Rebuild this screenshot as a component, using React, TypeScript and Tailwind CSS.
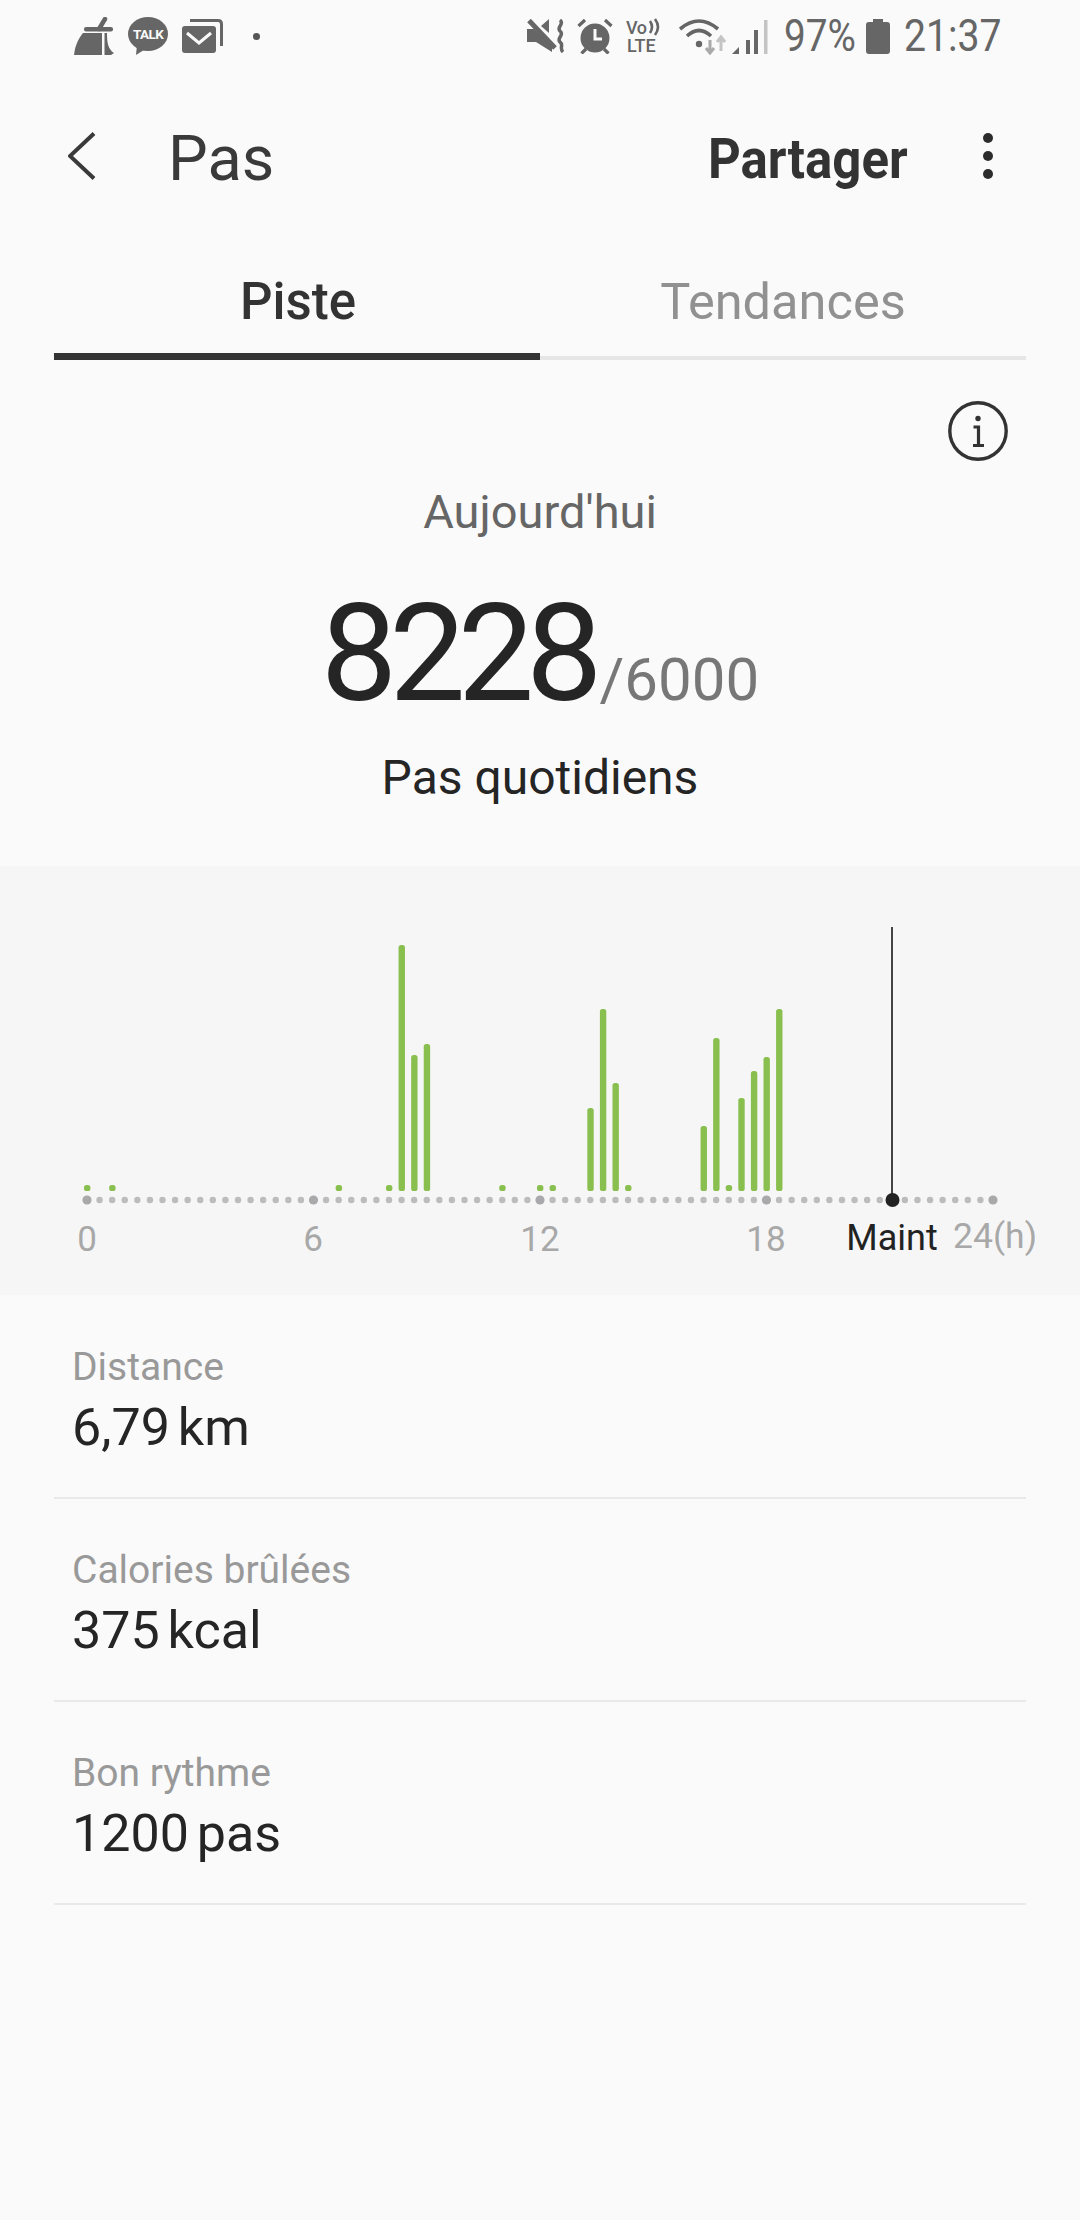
import React from 'react';

const ICON = '#666666';

const BroomIcon = () => (
  <svg width="40" height="38" viewBox="0 0 40 38" fill={ICON}>
    <path d="M31 2 L25 12" stroke={ICON} strokeWidth="4.5" strokeLinecap="round" />
    <rect x="10" y="10" width="29" height="4.5" rx="2" />
    <path d="M0 38 C1 29 4 22 9 16 H28 V38 Z" />
    <path d="M30.5 16 H33 C33 26 34 32 40 36 L37 38 H30.5 Z" />
  </svg>
);

const TalkIcon = () => (
  <svg width="40" height="38" viewBox="0 0 40 38">
    <ellipse cx="20" cy="17" rx="20" ry="17" fill={ICON} />
    <path d="M9 28 L8 38 L19 31 Z" fill={ICON} />
    <text x="20" y="22" textAnchor="middle" fontSize="13.5" fontWeight="700" fill="#fafafa" letterSpacing="-0.6">TALK</text>
  </svg>
);

const MailIcon = () => (
  <svg width="41" height="34" viewBox="0 0 41 34">
    <path d="M8 1.5 H36 Q39.5 1.5 39.5 5 V27" fill="none" stroke={ICON} strokeWidth="3" />
    <rect x="0" y="7" width="34" height="27" rx="3" fill={ICON} />
    <path d="M5 14 L17 24 L29 14" fill="none" stroke="#fafafa" strokeWidth="3" />
  </svg>
);

const MuteIcon = () => (
  <svg width="37" height="34" viewBox="0 0 37 34" fill={ICON}>
    <path d="M0 10 H7 L25 28 V33 L9 23 H0 Z" />
    <path d="M14 7 L22 0 V14 Z" />
    <path d="M2 1.5 L28 29" stroke={ICON} strokeWidth="5" />
    <path d="M33 1 C38 5 29 8 33 12 C38 16 29 19 33 23 C37 26 32 29 36 33" fill="none" stroke={ICON} strokeWidth="3.5" />
  </svg>
);

const AlarmIcon = () => (
  <svg width="36" height="36" viewBox="0 0 36 36">
    <circle cx="18" cy="20" r="14.5" fill={ICON} />
    <path d="M18 11 V21 H25" fill="none" stroke="#fafafa" strokeWidth="3" />
    <path d="M1.5 8 L8 2 M34.5 8 L28 2 M9 31 L4.5 35.5 M27 31 L31.5 35.5" stroke={ICON} strokeWidth="3.2" />
  </svg>
);

const VolteIcon = () => (
  <svg width="36" height="37" viewBox="0 0 36 37" fill={ICON}>
    <text x="0" y="16" fontSize="18" fontWeight="500" letterSpacing="-0.5">Vo</text>
    <path d="M24 3 Q28 9 24 15 M29 1 Q35 9 29 17" fill="none" stroke={ICON} strokeWidth="2.6" />
    <text x="1" y="34" fontSize="18" fontWeight="500">LTE</text>
  </svg>
);

const WifiIcon = () => (
  <svg width="47" height="37" viewBox="0 0 47 37">
    <path d="M1 11 Q20 -5 39 11" fill="none" stroke={ICON} strokeWidth="3.6" />
    <path d="M8 18 Q20 7 32 18" fill="none" stroke={ICON} strokeWidth="3.6" />
    <circle cx="20" cy="26" r="3.2" fill={ICON} />
    <path d="M31 22 V34 M27 30 L31 35 L35 30" fill="none" stroke="#aaaaaa" strokeWidth="3" />
    <path d="M42 33 V20 M38 24 L42 19 L46 24" fill="none" stroke="#c4c4c4" strokeWidth="3" />
  </svg>
);

const SignalIcon = () => (
  <svg width="36" height="36" viewBox="0 0 36 36">
    <path d="M0 36 L7 29 V36 Z" fill={ICON} />
    <rect x="14" y="22" width="4" height="14" fill={ICON} />
    <rect x="22" y="12" width="4" height="24" fill={ICON} />
    <rect x="32" y="2" width="3.5" height="34" fill="#c4c4c4" />
  </svg>
);

const BatteryIcon = () => (
  <svg width="24" height="35" viewBox="0 0 24 35">
    <path d="M7 0 H17 V3 H21 Q24 3 24 6 V32 Q24 35 21 35 H3 Q0 35 0 32 V6 Q0 3 3 3 H7 Z" fill={ICON} />
  </svg>
);

const StatusBar = () => (
  <div className="h-[72px] pl-[74px] pr-[78px] flex items-center justify-between">
    <div className="flex items-center gap-[14px]">
      <BroomIcon />
      <TalkIcon />
      <MailIcon />
      <div className="w-[7px] h-[7px] rounded-full bg-[#555555] ml-[16px]" />
    </div>
    <div className="flex items-center">
      <MuteIcon />
      <div className="ml-[13px]"><AlarmIcon /></div>
      <div className="ml-[13px]"><VolteIcon /></div>
      <div className="ml-[17px]"><WifiIcon /></div>
      <div className="ml-[6px]"><SignalIcon /></div>
      <span className="ml-[16px] w-[69px] text-[45px] leading-[50px] text-[#666666] whitespace-nowrap scale-x-[0.86] origin-left">97%</span>
      <div className="ml-[13px]"><BatteryIcon /></div>
      <span className="ml-[14px] w-[98px] text-[45px] leading-[50px] text-[#666666] whitespace-nowrap scale-x-[0.87] origin-left">21:37</span>
    </div>
  </div>
);

const Header = () => (
  <div className="mt-[43px] h-[88px] flex items-center pl-[68px] pr-[87px]">
    <svg width="28" height="48" viewBox="0 0 28 48" fill="none" className="mb-[7px]">
      <path d="M26 1.5 L2 24 L26 46.5" stroke="#3a3a3a" strokeWidth="4" />
    </svg>
    <span className="ml-[72px] text-[63px] text-[#3a3a3a]">Pas</span>
    <span className="ml-auto w-[199px] text-[56px] font-bold text-[#333333] whitespace-nowrap scale-x-[0.91] origin-left">Partager</span>
    <div className="ml-[76px] flex flex-col gap-[8px] mb-[6px]">
      <div className="w-[10px] h-[10px] rounded-full bg-[#2c2c2c]" />
      <div className="w-[10px] h-[10px] rounded-full bg-[#2c2c2c]" />
      <div className="w-[10px] h-[10px] rounded-full bg-[#2c2c2c]" />
    </div>
  </div>
);

const Tabs = () => (
  <div className="mx-[54px] h-[157px] flex">
    <div className="flex-1 flex flex-col justify-end items-center pb-[21px] border-b-[7px] border-[#333333]">
      <span className="text-[51px] leading-[60px] font-medium text-[#333333] translate-x-[1px]">Piste</span>
    </div>
    <div className="flex-1 flex flex-col justify-end items-center pb-[24px] border-b-[4px] border-[#e6e6e6]">
      <span className="text-[50.5px] leading-[60px] text-[#919191]">Tendances</span>
    </div>
  </div>
);

const Summary = () => (
  <div className="h-[506px] flex flex-col items-center">
    <div className="w-full flex justify-end pr-[72px] pt-[41px]">
      <svg width="60" height="60" viewBox="0 0 60 60" fill="none">
        <circle cx="30" cy="30" r="28.2" stroke="#333333" strokeWidth="3.4" />
        <circle cx="30" cy="17.5" r="2.7" fill="#333333" />
        <path d="M25.5 26 H30.5 V44.5 M25 44.5 H36" stroke="#333333" strokeWidth="3.2" />
      </svg>
    </div>
    <div className="mt-[21px] text-[47px] leading-[60px] text-[#666666]">Aujourd'hui</div>
    <div className="mt-[44px] flex items-baseline justify-center h-[136px]">
      <span className="text-[136px] leading-[136px] text-[#252525] tracking-[-8px]">8228</span>
      <span className="ml-[5px] text-[60px] leading-[136px] text-[#777777]">/6000</span>
    </div>
    <div className="mt-[26px] text-[48px] leading-[60px] text-[#252525]">Pas quotidiens</div>
  </div>
);

const AXIS_Y = 334;
const BAR_BOTTOM = 325;
const dotX = (i: number) => 87 + i * 12.583;

const bars = [
  { i: 0, top: 319 }, { i: 2, top: 319 }, { i: 20, top: 319 }, { i: 24, top: 319 },
  { i: 25, top: 79 }, { i: 26, top: 189 }, { i: 27, top: 178 },
  { i: 33, top: 319 }, { i: 36, top: 319 }, { i: 37, top: 319 },
  { i: 40, top: 242 }, { i: 41, top: 143 }, { i: 42, top: 217 }, { i: 43, top: 319 },
  { i: 49, top: 260 }, { i: 50, top: 172 }, { i: 51, top: 319 },
  { i: 52, top: 232 }, { i: 53, top: 205 }, { i: 54, top: 191 }, { i: 55, top: 143 },
];

const Chart = () => (
  <div className="h-[429px] bg-[#f6f6f6]">
    <svg width="1080" height="429" viewBox="0 0 1080 429">
      {Array.from({ length: 73 }, (_, i) =>
        i % 18 === 0 ? (
          <circle key={i} cx={dotX(i)} cy={AXIS_Y} r="4.6" fill="#a9a9ab" />
        ) : (
          <circle key={i} cx={dotX(i)} cy={AXIS_Y} r="3.2" fill="#bcbbbe" />
        )
      )}
      {bars.map((b) => (
        <rect key={b.i} x={dotX(b.i) - 3} y={b.top} width="6.4" height={BAR_BOTTOM - b.top} rx="2.6" fill="#89bf4f" />
      ))}
      <rect x="891" y="61" width="2" height="273" fill="#444444" />
      <circle cx="892.5" cy={AXIS_Y} r="7" fill="#222222" />
      <g fontSize="35" fill="#a8a8a8">
        <text x="87" y="385" textAnchor="middle">0</text>
        <text x="313" y="385" textAnchor="middle">6</text>
        <text x="540" y="385" textAnchor="middle">12</text>
        <text x="766" y="385" textAnchor="middle">18</text>
        <text x="1037" y="382" textAnchor="end" fontSize="35.5">24(h)</text>
      </g>
      <text x="892" y="384" textAnchor="middle" fontSize="36" fill="#222222">Maint</text>
    </svg>
  </div>
);

const Row = ({ label, value }: { label: string; value: string }) => (
  <div className="mx-[54px] h-[203px] pt-[48px] pl-[18px] border-b-2 border-[#e9e9e9]">
    <div className="text-[39px] leading-[46px] text-[#999999]">{label}</div>
    <div className="mt-[8px] text-[52px] leading-[60px] text-[#252525] [word-spacing:-5px]">{value}</div>
  </div>
);

export default function App() {
  return (
    <div className="w-[1080px] h-[2220px] bg-[#fafafa] overflow-hidden font-['Roboto',sans-serif]">
      <StatusBar />
      <Header />
      <Tabs />
      <Summary />
      <Chart />
      <div className="mt-[1px]">
        <Row label="Distance" value="6,79 km" />
        <Row label="Calories brûlées" value="375 kcal" />
        <Row label="Bon rythme" value="1200 pas" />
      </div>
    </div>
  );
}
